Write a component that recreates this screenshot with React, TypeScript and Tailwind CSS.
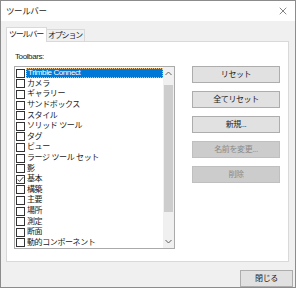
import { X } from "lucide-react";

const ITEMS = [
  "Trimble Connect",
  "カメラ",
  "ギャラリー",
  "サンドボックス",
  "スタイル",
  "ソリッド ツール",
  "タグ",
  "ビュー",
  "ラージ ツール セット",
  "影",
  "基本",
  "構築",
  "主要",
  "場所",
  "測定",
  "断面",
  "動的コンポーネント",
];

const FONT = { fontFamily: '"Liberation Sans", "Noto Sans CJK JP", sans-serif' };

function Btn({ label, disabled }: { label: string; disabled?: boolean }) {
  return (
    <div
      className={
        disabled
          ? "h-[17px] flex items-center justify-center bg-[#cccccc] border border-[#bfbfbf] text-[#8a8a8a]"
          : "h-[17px] flex items-center justify-center bg-[#e1e1e1] border border-[#adadad] text-[#1a1a1a]"
      }
    >
      {label}
    </div>
  );
}

export default function App() {
  return (
    <div
      className="w-[296px] h-[288px] bg-[#f0f0f0] border border-[#8c8c8c] flex flex-col text-[8px] tracking-[-0.4px] leading-none text-[#1a1a1a] overflow-hidden whitespace-nowrap"
      style={FONT}
    >
      <div className="h-[20px] shrink-0 bg-white flex items-center justify-between pl-[5px] pr-[6px]">
        <span className="text-[8.5px]">ツールバー</span>
        <X size={12} strokeWidth={1.2} className="text-[#333]" />
      </div>

      <div className="flex flex-col pl-[5px] pr-[6px] pt-[6px]">
        <div className="flex items-end h-[15px] relative z-10 tracking-[-1.2px]">
          <div className="shrink-0 h-[15px] pl-[2px] pr-[3px] bg-white border border-b-0 border-[#d9d9d9] flex items-center justify-center">
            ツールバー
          </div>
          <div className="shrink-0 h-[13px] pl-[1px] pr-[2px] bg-[#f0f0f0] border border-l-0 border-[#d9d9d9] flex items-center justify-center">
            オプション
          </div>
        </div>

        <div className="h-[221px] -mt-px bg-white border border-[#d9d9d9] flex flex-col pl-[7px] pt-[11px]">
          <div className="h-[12px] pl-px">Toolbars:</div>
          <div className="flex mt-px">
            <div className="w-[161px] h-[183px] border border-[#aaaaaa] flex">
              <div className="flex-1 flex flex-col pt-px">
                {ITEMS.map((name, i) => (
                  <div key={name} className="h-[10.75px] flex items-center pl-px">
                    <div className="w-[9px] h-[9px] border border-[#333] bg-white shrink-0 flex items-center justify-center">
                      {name === "基本" && (
                        <svg width="7" height="7" viewBox="0 0 7 7">
                          <path d="M0.8 3.6 L2.6 5.4 L6.2 1.2" fill="none" stroke="#333" strokeWidth="0.9" />
                        </svg>
                      )}
                    </div>
                    <span
                      className={
                        i === 0
                          ? "ml-px h-[10px] flex-1 flex items-center pl-px bg-[#0078d7] text-white border border-dotted border-[#f0c080]"
                          : "ml-px pl-px"
                      }
                    >
                      {name}
                    </span>
                  </div>
                ))}
              </div>
              <div className="w-[11px] bg-[#f0f0f0] flex flex-col items-center">
                <div className="h-[13px] flex items-center justify-center">
                  <svg width="7" height="5" viewBox="0 0 7 5">
                    <path d="M0.5 4 L3.5 1 L6.5 4" fill="none" stroke="#606060" strokeWidth="1" />
                  </svg>
                </div>
                <div className="w-[9px] h-[127px] bg-[#cdcdcd] mt-[5px]" />
                <div className="flex-1" />
                <div className="h-[13px] flex items-center justify-center">
                  <svg width="7" height="5" viewBox="0 0 7 5">
                    <path d="M0.5 1 L3.5 4 L6.5 1" fill="none" stroke="#606060" strokeWidth="1" />
                  </svg>
                </div>
              </div>
            </div>
            <div className="ml-[17px] w-[88px] flex flex-col gap-[8px]">
              <Btn label="リセット" />
              <Btn label="全てリセット" />
              <Btn label="新規..." />
              <Btn label="名前を変更..." disabled />
              <Btn label="削除" disabled />
            </div>
          </div>
        </div>

        <div className="flex justify-end mt-[8px] -mr-[4px]">
          <div className="w-[53px] h-[17px] bg-[#e1e1e1] border border-[#adadad] flex items-center justify-center">
            閉じる
          </div>
        </div>
      </div>
    </div>
  );
}
